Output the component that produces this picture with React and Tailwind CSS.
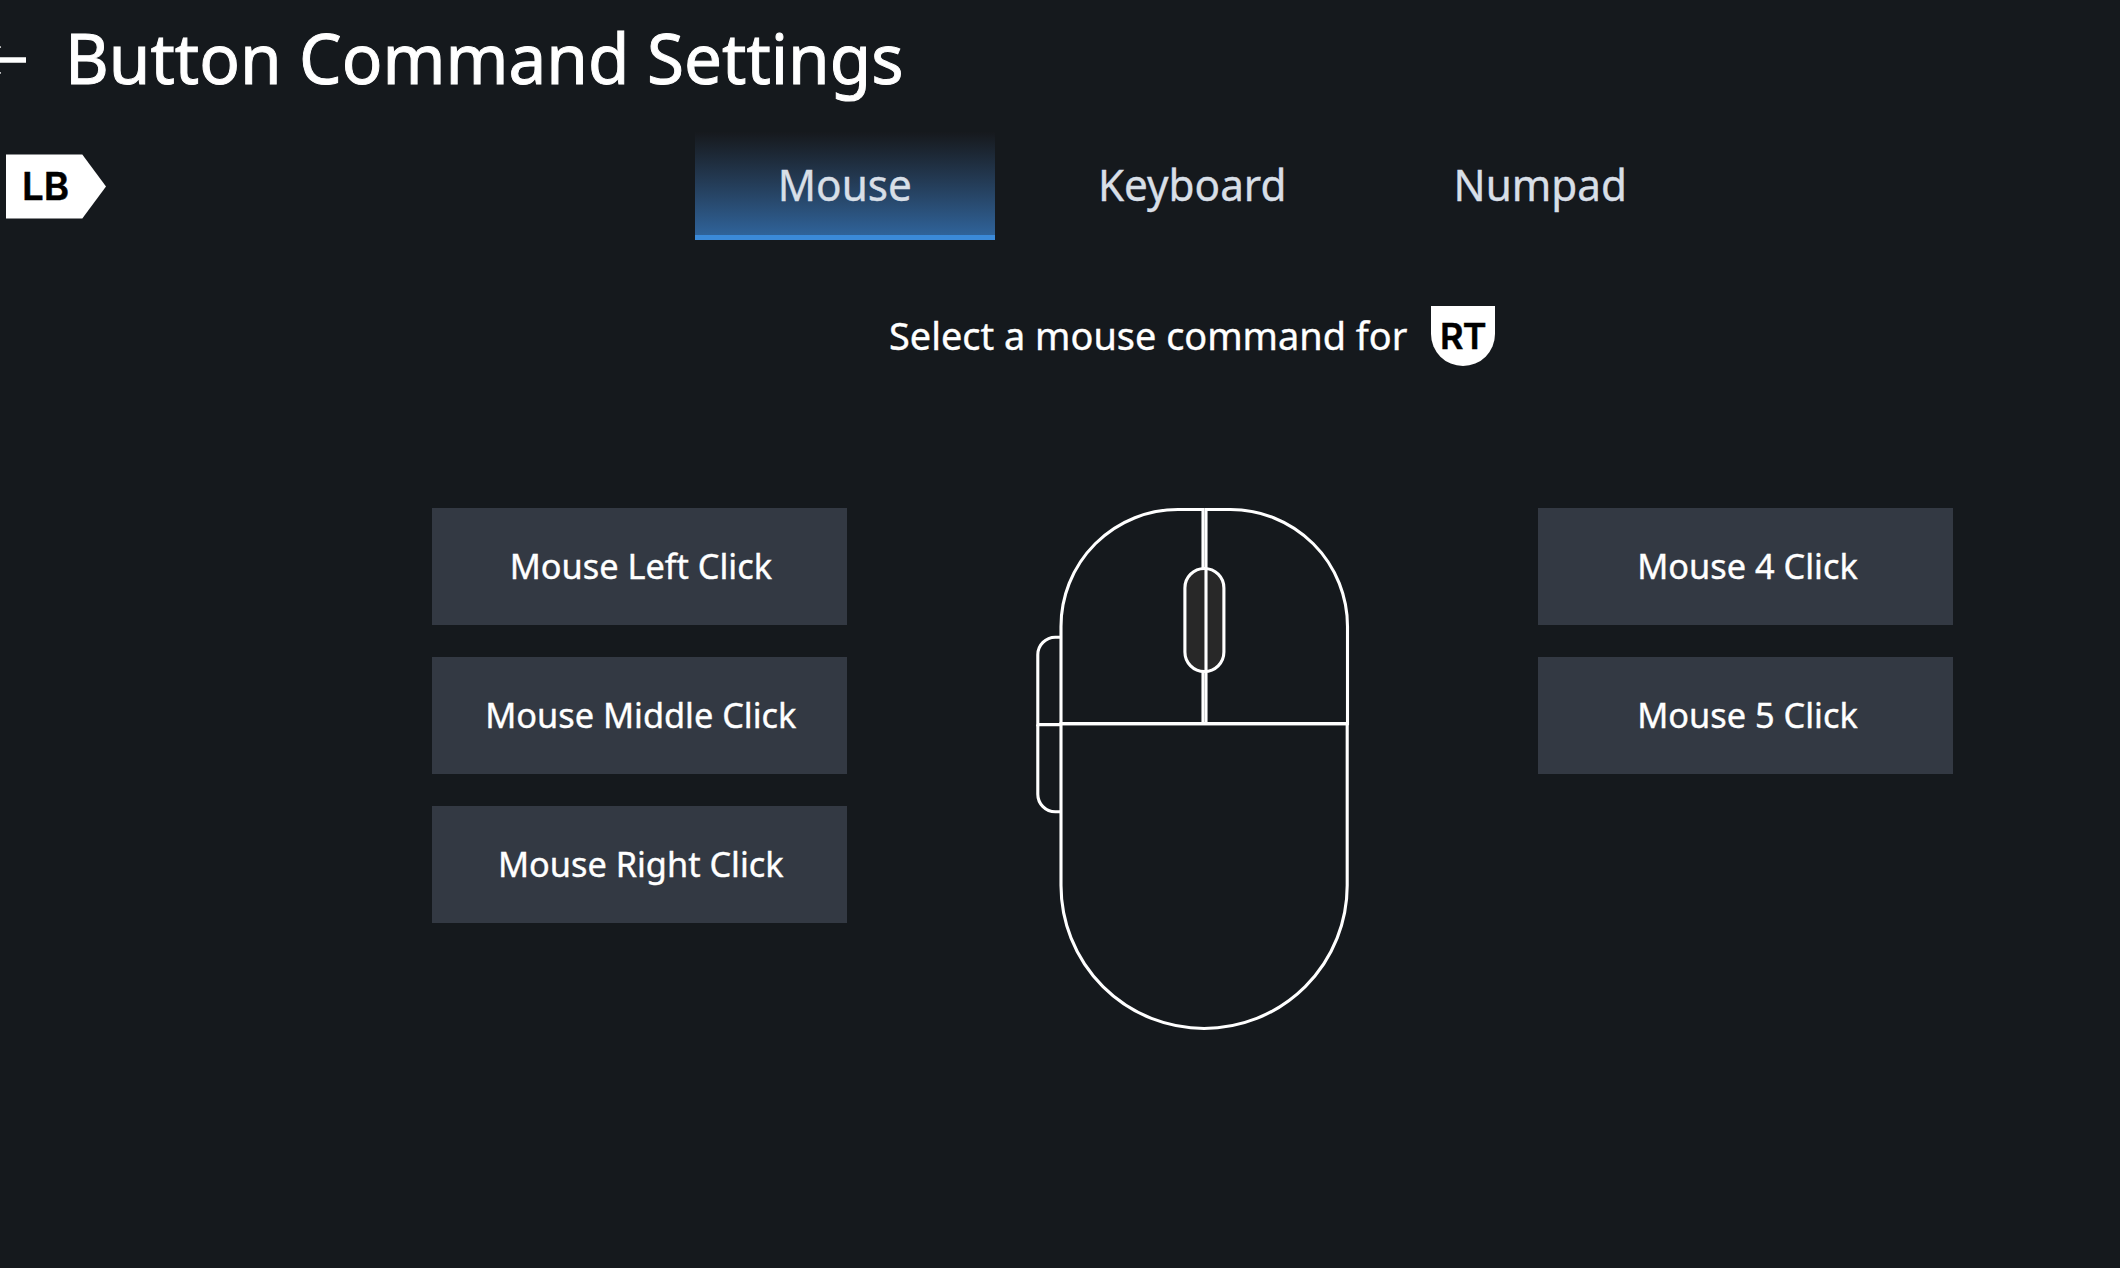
import React from 'react';

const tabs = [
  { label: 'Mouse', active: true },
  { label: 'Keyboard', active: false },
  { label: 'Numpad', active: false },
];

const leftCommands = ['Mouse Left Click', 'Mouse Middle Click', 'Mouse Right Click'];
const rightCommands = ['Mouse 4 Click', 'Mouse 5 Click'];

function BackArrow() {
  return (
    <svg width="26" height="34" viewBox="0 0 26 34" fill="none" stroke="#fff" strokeWidth="5.4" className="shrink-0">
      <path d="M26 17H-14M-0.7 2.2L-15.5 17L-0.7 31.8" />
    </svg>
  );
}

function BumperBadge({ label }) {
  return (
    <div className="grid h-[64px] w-[100px] shrink-0 grid-cols-1 grid-rows-1">
      <svg width="100" height="64" viewBox="0 0 100 64" className="col-start-1 row-start-1 overflow-visible">
        <path d="M0 0.5H76.3L100 32.5L76.3 64.5H0Z" fill="#fff" />
      </svg>
      <span className="col-start-1 row-start-1 self-center pt-px pl-4 font-['Inter',sans-serif] text-[38.5px] leading-none font-semibold text-black [-webkit-text-stroke:0.5px_#000]">
        {label}
      </span>
    </div>
  );
}

function TriggerBadge({ label }) {
  return (
    <div className="flex h-[60px] w-[64px] items-center justify-center rounded-b-[32px] bg-white font-['Inter',sans-serif] text-[36px] leading-none font-semibold tracking-[-0.5px] text-black [-webkit-text-stroke:0.5px_#000]">
      {label}
    </div>
  );
}

function CommandButton({ label }) {
  return (
    <button className="flex h-[117px] w-[415px] items-center justify-center bg-[#333943] pr-px pb-px pl-1 text-[35px] leading-[48px] text-white [-webkit-text-stroke:0.4px_#fff]">
      <span className="block scale-x-[0.98]">{label}</span>
    </button>
  );
}

function MouseDiagram() {
  return (
    <svg width="314" height="524" viewBox="1036 507 314 524" fill="none" stroke="#fff" strokeWidth="3.1" className="shrink-0">
      <path d="M1203 509.5H1178A117 117 0 0 0 1061 626.5V723.6H1203Z" />
      <path d="M1206 509.5H1230.5A117 117 0 0 1 1347.5 626.5V723.6H1206Z" />
      <path d="M1061 723.6H1347.2V885.5A143.1 143.1 0 0 1 1061 885.5Z" />
      <path d="M1061 637.3H1055.3A17.5 17.5 0 0 0 1037.8 654.8V724.6H1061" />
      <path d="M1037.8 724.6V794.2A17.5 17.5 0 0 0 1055.3 811.7H1061" />
      <rect x="1184.9" y="568.5" width="39" height="103" rx="19.5" fill="#282828" />
      <path d="M1206 568V672" />
    </svg>
  );
}

export default function App() {
  return (
    <div className="flex h-[1268px] w-[2120px] flex-col overflow-hidden bg-[#15191d] font-['Noto_Sans',sans-serif] text-white">
      <header className="flex h-[132px] items-start pt-3">
        <div className="flex h-24 items-center">
          <BackArrow />
        </div>
        <h1 className="ml-[39px] origin-left scale-x-[0.963] text-[70px] leading-[90px] whitespace-nowrap [-webkit-text-stroke:1px_#fff]">
          Button Command Settings
        </h1>
      </header>

      <nav className="flex h-[108px] items-center pl-1.5">
        <BumperBadge label="LB" />
        <div className="ml-[589px] flex gap-12">
          {tabs.map((tab) => (
            <button
              key={tab.label}
              className={
                'flex h-[108px] w-[300px] items-center justify-center border-b-[5px] pt-px pr-px text-[44px] leading-[60px] text-[#d8dfe7] [-webkit-text-stroke:0.4px_#d8dfe7] ' +
                (tab.active
                  ? 'border-[#3b8ad9] bg-linear-to-b from-[#16191d] to-[#2f639a]'
                  : 'border-transparent')
              }
            >
              <span className="block scale-x-[0.96]">{tab.label}</span>
            </button>
          ))}
        </div>
      </nav>

      <section className="flex items-center pt-[66px] pl-[889px]">
        <p className="w-[542px] origin-left scale-x-[0.971] pb-0.5 text-[39px] leading-[54px] whitespace-nowrap [-webkit-text-stroke:0.4px_#fff]">
          Select a mouse command for
        </p>
        <TriggerBadge label="RT" />
      </section>

      <main className="flex items-start pt-[142px] pl-[432px]">
        <div className="flex flex-col gap-8">
          {leftCommands.map((label) => (
            <CommandButton key={label} label={label} />
          ))}
        </div>
        <div className="-mt-px mr-[188px] ml-[189px]">
          <MouseDiagram />
        </div>
        <div className="flex flex-col gap-8">
          {rightCommands.map((label) => (
            <CommandButton key={label} label={label} />
          ))}
        </div>
      </main>
    </div>
  );
}
